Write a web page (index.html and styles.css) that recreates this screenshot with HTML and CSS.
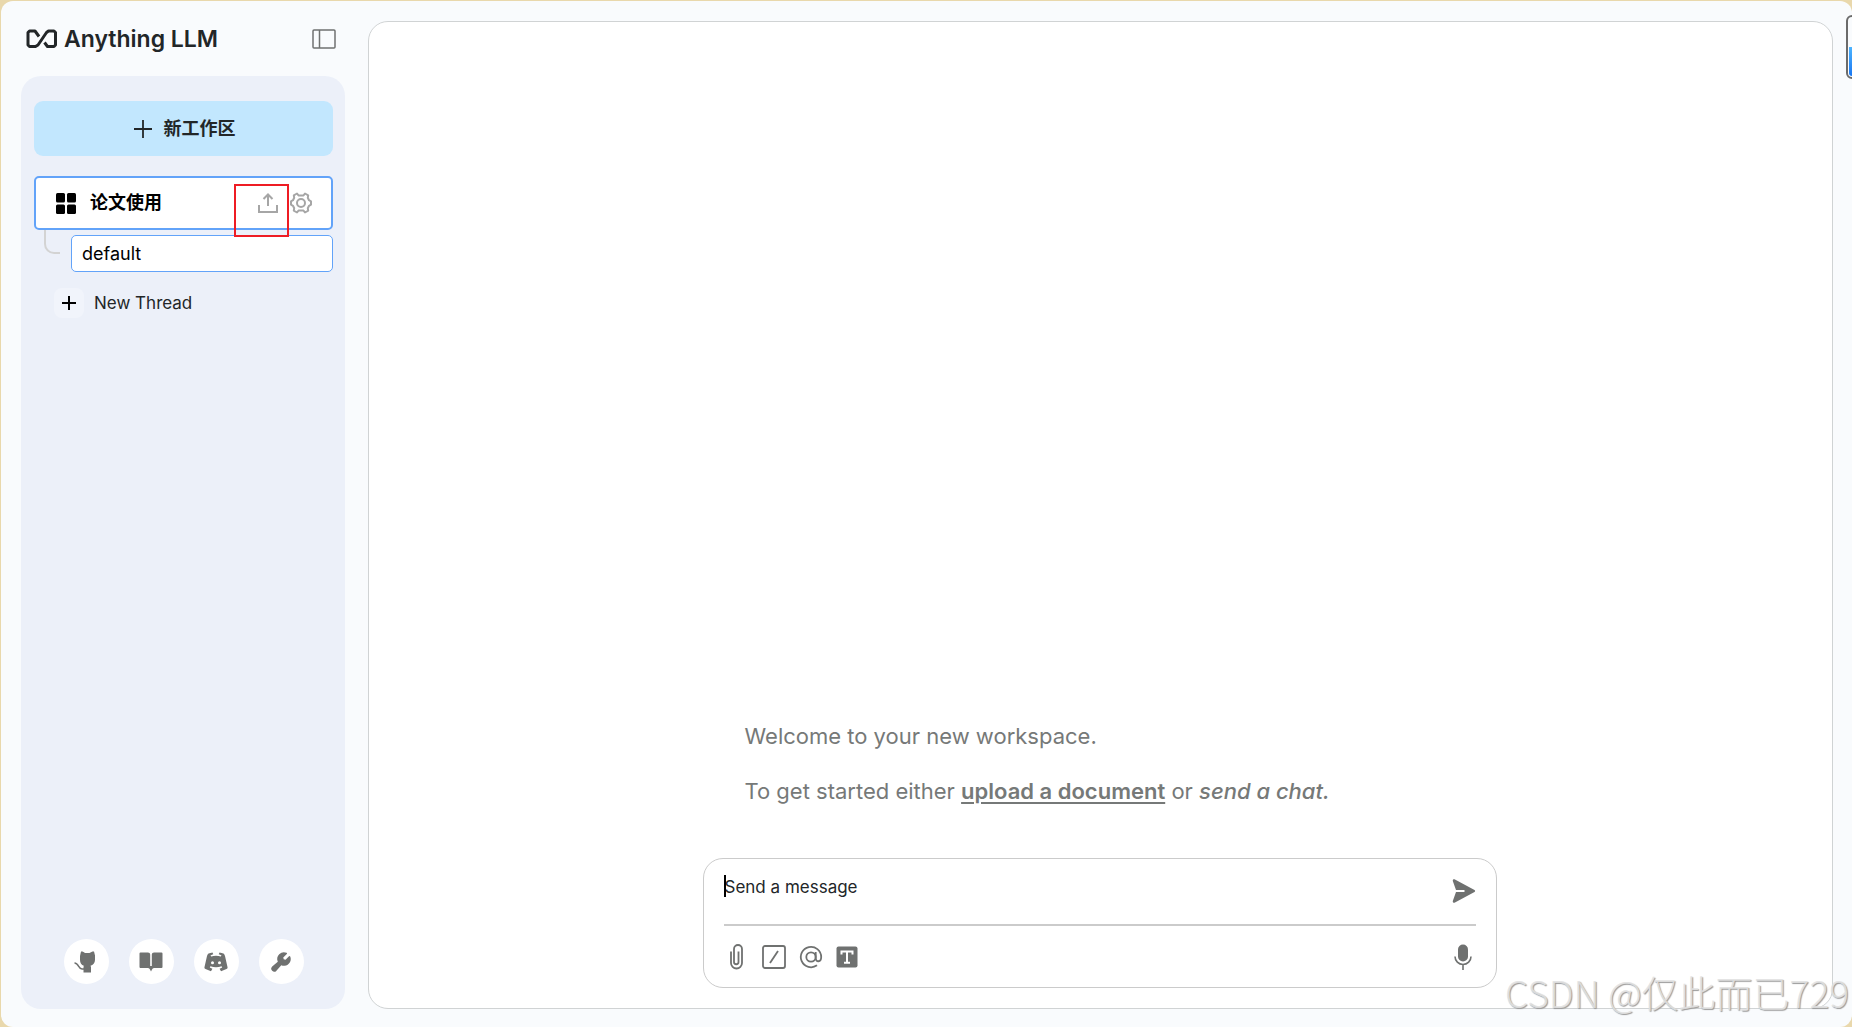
FILE: index.html
```html
<!DOCTYPE html>
<html lang="zh-CN">
<head>
<meta charset="utf-8">
<meta name="viewport" content="width=device-width, initial-scale=1">
<title>Anything LLM</title>
<link rel="stylesheet" href="styles.css">
</head>
<body>
<div class="app">
  <aside class="side">
    <header class="brand">
      <a class="logo" href="#">
        <svg width="31" height="20" viewBox="0 0 31 20" fill="none" stroke="currentColor" stroke-width="3" stroke-linejoin="round"><path d="M13 7.500 9 2H3.500L2 3.500V16L3.500 17.500H9.500L12 16 20.500 3.500 22.500 2H28L29.500 3.500V16L28 17.500H21.500L18.500 13.500"/></svg>
        <span>Anything LLM</span>
      </a>
      <button class="icon-btn" aria-label="Toggle sidebar">
        <svg width="24" height="20" viewBox="0 0 24 20" fill="none" stroke="currentColor" stroke-width="1.500"><rect x="1" y="1" width="22" height="18" rx="1"/><path d="M7.500 1v18"/></svg>
      </button>
    </header>
    <nav class="panel">
      <button class="new-workspace">
        <svg width="18" height="18" viewBox="0 0 18 18" fill="none" stroke="currentColor" stroke-width="1.800"><path d="M9 0v18M0 9h18"/></svg>
        <span>新工作区</span>
      </button>
      <div class="workspace">
        <svg width="20" height="21" viewBox="0 0 20 21" fill="currentColor"><rect width="9" height="9.500" rx="1.500"/><rect x="11" width="9" height="9.500" rx="1.500"/><rect y="11.500" width="9" height="9.500" rx="1.500"/><rect x="11" y="11.500" width="9" height="9.500" rx="1.500"/></svg>
        <a class="workspace-name" href="#">论文使用</a>
        <button class="icon-btn faint" aria-label="Upload">
          <svg width="20" height="20" viewBox="0 0 20 20" fill="none" stroke="currentColor" stroke-width="2"><path d="M1 12v7h18v-7M10 13V2M5.500 6 10 1.500 14.500 6"/></svg>
        </button>
        <button class="icon-btn faint" aria-label="Settings">
          <svg width="22" height="22" viewBox="0 0 22 22" fill="none" stroke="currentColor" stroke-width="2" stroke-linejoin="round"><circle cx="11" cy="11" r="4"/><path d="M8.500 3.400 7 1.500 3.800 3.300 4.200 5.800 3 8.200 1 9.300V12.700L3 13.800 4.200 16.200 3.800 18.700 7 20.500 8.500 18.600H13.500L15 20.500 18.200 18.700 17.800 16.200 19 13.800 21 12.700V9.300L19 8.200 17.800 5.800 18.200 3.300 15 1.500 13.500 3.400Z"/></svg>
        </button>
        <span class="marker"></span>
      </div>
      <div class="threads">
        <span class="branch"></span>
        <a class="thread" href="#">default</a>
      </div>
      <button class="new-thread">
        <span class="plus"><svg width="14" height="14" viewBox="0 0 14 14" fill="none" stroke="currentColor" stroke-width="2"><path d="M7 0v14M0 7h14"/></svg></span>
        <span>New Thread</span>
      </button>
      <footer class="links">
        <a href="#" aria-label="GitHub"><svg width="24" height="22" viewBox="0 0 24 22" fill="currentColor"><path d="M7 .500C8.500.300 10 1 11 2h4.500C17 1 18.500.300 20 .500l1 4v4.500c0 3-2 5.200-4.500 5.800L17 16v5.500H9.500V16l.300-1.200C7.500 14 6 12 6 9V5Z"/><path d="M.500 12C5 12 4 18 8 18h2" fill="none" stroke="currentColor" stroke-width="1.500"/></svg></a>
        <a href="#" aria-label="Docs"><svg width="24" height="20" viewBox="0 0 24 20" fill="currentColor"><path d="M1.500.500H9Q11.200.500 11.200 2.500V14h1.600V2.500Q12.800.500 15 .500h7.500q1 0 1 1V15q0 1-1 1H15q-1.500 0-2 1.500L12 19.500l-1-2Q10.500 16 9 16H1.500q-1 0-1-1V1.500q0-1 1-1Z"/></svg></a>
        <a href="#" aria-label="Discord"><svg width="24" height="20" viewBox="0 0 24 20" fill="currentColor"><path fill-rule="evenodd" d="M4.500 1.500 8.500.500 9.300 2.300Q8 2.500 6.500 3.500L7.200 4.600Q12 2.800 16.800 4.600L17.500 3.500Q16 2.500 14.700 2.300L15.500.500 19.500 1.500Q20.500 2 21 4L23.600 15.500Q23.600 16.500 22.500 17L17 19.200 15.600 16.700 18.200 15.400 17.600 14.300Q12 16.200 6.400 14.300L5.800 15.400 8.400 16.700 7 19.200 1.500 17Q.400 16.500.400 15.500L3 4Q3.500 2 4.500 1.500ZM8.500 9.300a1.500 1.500 0 1 0 0 3 1.500 1.500 0 0 0 0-3Zm7 0a1.500 1.500 0 1 0 0 3 1.500 1.500 0 0 0 0-3Z"/></svg></a>
        <a href="#" aria-label="Settings"><svg width="24" height="24" viewBox="0 0 256 256" fill="currentColor"><path d="M232 96a72 72 0 0 1-100.900 66L79 222.200l-.900.900a32 32 0 0 1-45.200-45.200l.900-.900L94 124.900A72 72 0 0 1 187.500 29.800a8 8 0 0 1 2.500 12.700L152 80l5 19 19 5 37.500-38a8 8 0 0 1 12.700 2.500A71.500 71.500 0 0 1 232 96Z"/></svg></a>
      </footer>
    </nav>
  </aside>
  <main class="chat">
    <section class="welcome">
      <p>Welcome to your new workspace.</p>
      <p>To get started either <a href="#">upload a document</a> or <em>send a chat.</em></p>
    </section>
    <form class="composer">
      <div class="entry">
        <span class="caret"></span>
        <textarea rows="1" placeholder="Send a message" aria-label="Send a message"></textarea>
        <button type="button" class="icon-btn" aria-label="Send">
          <svg width="24" height="24" viewBox="0 0 24 24" fill="currentColor"><path d="M2.500.300 22.500 11q1.300 1 0 2L2.500 23.700Q.500 24.200.800 22L4 13h8.500v-2H4L.800 2Q.500-.200 2.500.300Z"/></svg>
        </button>
      </div>
      <div class="tools">
        <button type="button" class="icon-btn" aria-label="Attach"><svg width="24" height="26" viewBox="0 0 24 26" fill="none" stroke="currentColor" stroke-width="1.800"><path d="M6 7.500V19a5.500 5.500 0 0 0 11 0V5a4 4 0 0 0-8 0v13a2 2 0 0 0 4.500 0V7.500"/></svg></button>
        <button type="button" class="icon-btn" aria-label="Commands"><svg width="24" height="24" viewBox="0 0 24 24" fill="none" stroke="currentColor" stroke-width="1.800"><rect x="1" y="1" width="22" height="22" rx="2"/><path d="M8 18l8-12"/></svg></button>
        <button type="button" class="icon-btn" aria-label="Agents"><svg width="24" height="24" viewBox="0 0 24 24" fill="none" stroke="currentColor" stroke-width="1.800"><circle cx="12" cy="12" r="4.700"/><path d="M16.700 7v6c0 4.500 5.500 4.500 5.500-1A10.200 10.200 0 1 0 18 20.300"/></svg></button>
        <button type="button" class="icon-btn" aria-label="Text size"><svg width="22" height="22" viewBox="0 0 22 22"><rect x=".5" y=".5" width="21" height="21" rx="2" fill="currentColor"/><path d="M5.500 8.500V5.500h11v3M11 5.500v11M8 16.800h6" fill="none" stroke="#fff" stroke-width="2"/></svg></button>
        <button type="button" class="icon-btn mic" aria-label="Speak"><svg width="24" height="26" viewBox="0 0 24 26"><rect x="7" y=".5" width="10" height="17" rx="5" fill="currentColor"/><path d="M4 12.500a8 8 0 0 0 16 0M12 20.500V26" fill="none" stroke="currentColor" stroke-width="1.600"/></svg></button>
      </div>
    </form>
  </main>
  <span class="dock"></span>
  <span class="watermark">CSDN @仅此而已729</span>
</div>
</body>
</html>
```
FILE: styles.css
```css
* { box-sizing: border-box; }
body {
  margin: 0;
  background: #e9d8ac;
  color: #222628;
  font-family: "Inter", "Noto Sans CJK SC", sans-serif;
  font-size: 17px;
  line-height: 24px;
}
button { border: 0; padding: 0; background: none; color: inherit; font: inherit; cursor: pointer; }
a { color: inherit; text-decoration: none; }
svg { display: block; flex: none; }
.app {
  position: relative;
  display: flex;
  gap: 23px;
  height: calc(100vh - 1px);
  margin: 1px 0 0 1px;
  padding: 20px 19px 18px 20px;
  border-radius: 12px;
  background: #f9fbfd;
  overflow: hidden;
}
.side { display: flex; flex-direction: column; flex: none; width: 324px; }
.brand { display: flex; justify-content: space-between; align-items: center; height: 36px; margin-bottom: 19px; padding: 0 9px 0 5px; }
.logo { display: flex; align-items: center; gap: 7px; font-size: 23px; font-weight: 600; }
.icon-btn { color: #6f7170; }
.panel { display: flex; flex-direction: column; flex: 1; padding: 25px 12px 25px 13px; border-radius: 20px; background: #ecf0f9; }
.new-workspace { display: flex; justify-content: center; align-items: center; gap: 12px; height: 55px; margin-bottom: 20px; padding-left: 2px; border-radius: 9px; background: #c2e7fe; font-size: 18px; font-weight: 700; }
.workspace { position: relative; display: flex; align-items: center; gap: 12px; height: 54px; padding: 0 19px 0 20px; border: 2px solid #62a3f9; border-radius: 5px; background: #fff; color: #000; }
.workspace-name { flex: 1; margin-left: 2px; font-size: 18px; font-weight: 700; }
.faint { color: #a6a6a6; }
.marker { position: absolute; left: 198px; top: 6px; width: 55px; height: 53px; border: 2px solid #ee1c24; }
.threads { display: flex; gap: 11px; padding-left: 10px; }
.branch { width: 16px; height: 24px; border: solid #d3d3d3; border-width: 0 0 2px 2px; border-bottom-left-radius: 10px; }
.thread { flex: 1; height: 37px; margin-top: 5px; padding: 0 10px; border: 1px solid #62a3f9; border-radius: 5px; background: #fff; color: #000; font-size: 18px; line-height: 35px; }
.new-thread { display: flex; align-items: center; gap: 10px; margin-top: 16px; padding-left: 20px; }
.plus { display: grid; place-items: center; width: 30px; height: 30px; border-radius: 8px; background: #f1f4fb; color: #000; }
.links { display: flex; justify-content: center; gap: 20px; margin-top: auto; }
.links a { display: grid; place-items: center; width: 45px; height: 45px; border-radius: 50%; background: #fff; color: #6f7170; }
.chat { display: flex; flex-direction: column; justify-content: flex-end; align-items: center; flex: 1; min-width: 0; padding: 0 2px 20px 0; border: 1px solid #d0d3d4; border-radius: 20px; background: #fff; }
.welcome { width: 100%; max-width: 710px; margin-bottom: 51px; color: #767978; font-size: 22px; line-height: 32px; }
.welcome p { margin: 0 0 23px; white-space: nowrap; }
.welcome p:last-child { margin: 0; }
.welcome a { font-weight: 600; text-decoration: underline; text-decoration-thickness: 2px; text-underline-offset: 3px; }
.welcome em { font-weight: 500; }
.composer { width: 100%; max-width: 794px; padding: 16px 20px 13px; border: 1px solid #cbcbcb; border-radius: 20px; background: #fff; }
.entry { position: relative; display: flex; justify-content: space-between; align-items: flex-start; height: 51px; border-bottom: 2px solid #cbcbcb; }
.entry textarea { flex: 1; height: 24px; margin: 0; padding: 0 1px; border: 0; outline: 0; resize: none; background: none; color: inherit; font: inherit; overflow: hidden; }
.entry textarea::placeholder { color: #222628; opacity: 1; }
.entry .icon-btn { padding-top: 4px; }
.caret { position: absolute; left: 0; top: 0; width: 2px; height: 22px; background: #000; }
.tools { display: flex; align-items: center; gap: 13px; height: 34px; margin-top: 14px; padding: 0 1px; }
.mic { margin-left: auto; }
.dock { position: absolute; right: -30px; top: 14px; width: 36px; height: 64px; padding: 1px; border: 2px solid #6b6b6b; border-radius: 6px; background: linear-gradient(#f9fbfd 50%, #4db4ff 50%, #1977f2) content-box; }
.watermark { position: absolute; right: 3px; bottom: 11px; color: rgba(226, 226, 226, .9); font-family: "Noto Sans CJK SC", sans-serif; font-size: 37px; font-weight: 300; line-height: 48px; text-shadow: 1px 1px 1px #999; white-space: nowrap; }
```
